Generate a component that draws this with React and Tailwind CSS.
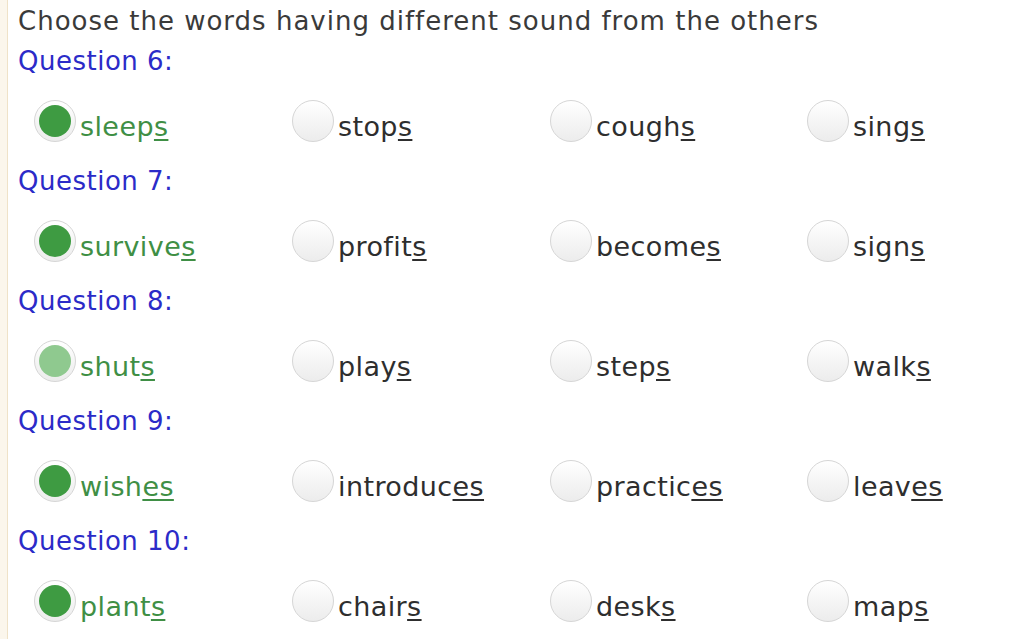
import React from 'react';

const questions = [
  { n: 6, picked: 0, dim: false, opts: [['sleep', 's'], ['stop', 's'], ['cough', 's'], ['sing', 's']] },
  { n: 7, picked: 0, dim: false, opts: [['survive', 's'], ['profit', 's'], ['become', 's'], ['sign', 's']] },
  { n: 8, picked: 0, dim: true, opts: [['shut', 's'], ['play', 's'], ['step', 's'], ['walk', 's']] },
  { n: 9, picked: 0, dim: false, opts: [['wish', 'es'], ['introduc', 'es'], ['practic', 'es'], ['leav', 'es']] },
  { n: 10, picked: 0, dim: false, opts: [['plant', 's'], ['chair', 's'], ['desk', 's'], ['map', 's']] },
];

const Radio = ({ checked, dim }) => (
  <span className="w-[42px] h-[42px] rounded-full border border-[#d6d6d6] bg-gradient-to-b from-white to-[#ececec] flex items-center justify-center shrink-0">
    {checked && (
      <span className={`w-[32px] h-[32px] rounded-full ${dim ? 'bg-[#8fc98f]' : 'bg-[#3e9b42]'}`} />
    )}
  </span>
);

const App = () => {
  return (
    <div className="w-[1024px] h-[639px] bg-white flex overflow-hidden" style={{ fontFamily: '"DejaVu Sans", sans-serif' }}>
      <div className="w-[8px] bg-[#fbf6ec] border-r border-[#efe2c8] shrink-0" />
      <div className="flex flex-col pl-[10px] pt-[2px]">
        <div className="h-[42px] flex items-center text-[26px] text-[#3a3a3a] tracking-[1px]">
          Choose the words having different sound from the others
        </div>
        {questions.map((q) => (
          <div key={q.n} className="flex flex-col">
            <div className="h-[40px] flex items-center text-[26px] text-[#2b2bc8] tracking-[0.5px]">Question {q.n}:</div>
            <div className="h-[80px] grid grid-cols-[258px_258px_257px_200px] items-center pl-[16px]">
              {q.opts.map(([stem, end], i) => {
                const checked = i === q.picked;
                return (
                  <label key={i} className="flex items-center gap-[4px]">
                    <Radio checked={checked} dim={q.dim} />
                    <span className={`text-[27px] pt-[12px] tracking-[0.4px] ${checked ? 'text-[#3f8f45]' : 'text-[#2e2e2e]'}`}>
                      {stem}
                      <span className="underline underline-offset-[3px] decoration-[2px]">{end}</span>
                    </span>
                  </label>
                );
              })}
            </div>
          </div>
        ))}
      </div>
    </div>
  );
};

export default App;
